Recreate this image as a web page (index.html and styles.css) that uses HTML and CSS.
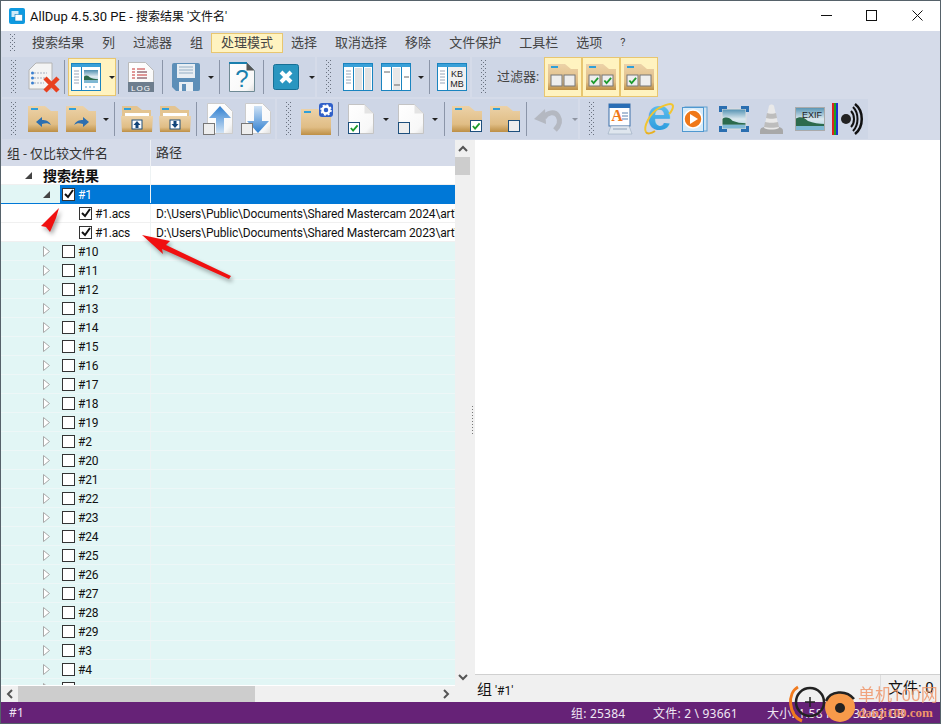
FILE: index.html
```html
<!DOCTYPE html>
<html lang="zh-CN">
<head>
  <meta charset="UTF-8" />
  <title>AllDup 4.5.30 PE</title>
  <link rel="stylesheet" href="styles.css">
</head>
<body>

  <!-- shared icon parts -->
  <svg class="defs" width="0" height="0">
    <defs>
      <linearGradient id="tan" x1="0" y1="0" x2="0" y2="1"><stop offset="0" stop-color="#ecd2a8"/><stop offset="0.7" stop-color="#e0bd85"/><stop offset="1" stop-color="#bd8f45"/></linearGradient>
      <linearGradient id="page" x1="0" y1="0" x2="1" y2="1"><stop offset="0" stop-color="#ffffff"/><stop offset="0.8" stop-color="#f8f8f8"/><stop offset="1" stop-color="#dedede"/></linearGradient>
      <linearGradient id="blueup" x1="0" y1="0" x2="0" y2="1"><stop offset="0" stop-color="#2f7fd0"/><stop offset="1" stop-color="#cfe2f5"/></linearGradient>
      <linearGradient id="bluedown" x1="0" y1="0" x2="0" y2="1"><stop offset="0" stop-color="#cfe2f5"/><stop offset="1" stop-color="#2f7fd0"/></linearGradient>
      <linearGradient id="sky" x1="0" y1="0" x2="0" y2="1"><stop offset="0" stop-color="#4f8fb0"/><stop offset="0.5" stop-color="#dbe8ee"/><stop offset="1" stop-color="#a8cfe0"/></linearGradient>
      <linearGradient id="ieblue" x1="0" y1="0" x2="0" y2="1"><stop offset="0" stop-color="#7fd4f7"/><stop offset="1" stop-color="#1a8fd8"/></linearGradient>

      <symbol id="photo" viewBox="0 0 30 24" preserveAspectRatio="none">
        <rect width="30" height="24" fill="url(#sky)"/>
        <path d="M0 12c5-3 9-2 13 2 5 2 11 3 17 3v2H0z" fill="#2c6a4c"/>
        <rect y="19" width="30" height="5" fill="#7fb8d4"/>
      </symbol>
      <symbol id="folder" viewBox="0 0 30 26">
        <path d="M0 0h17l6 5h7v21H0z" fill="url(#tan)"/>
        <rect x="3" y="2" width="7" height="2" fill="#2f9fd8"/>
      </symbol>
      <symbol id="openfolder" viewBox="0 0 32 26">
        <path d="M1 0h15l5 4h9v10H1z" fill="#e3c491"/>
        <rect x="3" y="2" width="7" height="2" fill="#2f9fd8"/>
        <rect x="4" y="7" width="24" height="4" fill="#fff"/>
        <path d="M0 10h32l-1 16H1z" fill="url(#tan)"/>
        <rect x="11" y="14" width="10" height="9" fill="#fff" stroke="#1d4f7c"/>
      </symbol>
      <symbol id="doc" viewBox="0 0 26 30">
        <path d="M.5.5h16l9 9v20H.5z" fill="url(#page)" stroke="#c4c4c4"/>
        <path d="M16.500.5v9h9z" fill="#e4e4e4"/>
      </symbol>
      <symbol id="gridcols" viewBox="0 0 30 28">
        <rect x=".5" y=".5" width="29" height="27" fill="#fff" stroke="#1a84bf"/>
        <rect x="1" y="1" width="28" height="3" fill="#3aa0d8"/>
        <path d="M10.500 4v24M20.500 4v24" stroke="#1a84bf"/>
      </symbol>
      <symbol id="check" viewBox="0 0 10 10">
        <path d="M1 5l3 3 5-7" fill="none" stroke="#111" stroke-width="2"/>
      </symbol>
      <symbol id="greencheck" viewBox="0 0 10 10">
        <path d="M1.500 5l2.500 3 5-6" fill="none" stroke="#1c9a2c" stroke-width="2"/>
      </symbol>
      <symbol id="tri-closed" viewBox="0 0 7 11">
        <path d="M.5.500l6 5-6 5z" fill="#fff" stroke="#a8a8a8"/>
      </symbol>
      <symbol id="tri-open" viewBox="0 0 7 7">
        <path d="M7 0v7H0z" fill="#444"/>
      </symbol>
    </defs>
  </svg>

  <div class="window">

    <div class="titlebar">
      <svg class="app-icon" width="16" height="16" viewBox="0 0 16 16">
        <rect width="16" height="16" rx="2" fill="#0f9ae0"/>
        <rect x="2.500" y="3" width="7" height="6" fill="#cfeaf8"/>
        <rect x="6" y="6.500" width="7.500" height="6.500" fill="#fff" stroke="#0f7fc0" stroke-width=".6"/>
      </svg>
      <span class="title">AllDup 4.5.30 PE - <span class="title-zh">搜索结果 '文件名'</span></span>
      <div class="win-btns">
        <div class="win-btn"><svg width="11" height="11" viewBox="0 0 11 11"><path d="M0 5.500h11" stroke="#111"/></svg></div>
        <div class="win-btn"><svg width="11" height="11" viewBox="0 0 11 11"><rect x=".5" y=".5" width="10" height="10" fill="none" stroke="#111"/></svg></div>
        <div class="win-btn"><svg width="11" height="11" viewBox="0 0 11 11"><path d="M.5.500l10 10M10.500.500l-10 10" stroke="#111"/></svg></div>
      </div>
    </div>

    <div class="menubar">
      <div class="grip grip-menu ml9"></div>
      <span class="menu-item first">搜索结果</span>
      <span class="menu-item">列</span>
      <span class="menu-item">过滤器</span>
      <span class="menu-item">组</span>
      <span class="menu-item active">处理模式</span>
      <span class="menu-item">选择</span>
      <span class="menu-item">取消选择</span>
      <span class="menu-item">移除</span>
      <span class="menu-item">文件保护</span>
      <span class="menu-item">工具栏</span>
      <span class="menu-item">选项</span>
      <span class="menu-item small">?</span>
    </div>

    <div class="toolrow">
      <div class="band band-a1">
        <div class="grip ml9"></div>
        <svg class="ml12" width="32" height="30" viewBox="0 0 32 30">
          <path d="M1 8l7-7h16v26H1z" fill="#f4f4f4" stroke="#b4b4b4"/>
          <path d="M6 11h13M6 16h13M6 21h10" stroke="#a4aec0" stroke-dasharray="2 1"/>
          <circle cx="4.500" cy="11" r="1.500" fill="#3a7fd0"/><circle cx="4.500" cy="16" r="1.500" fill="#3a7fd0"/><circle cx="4.500" cy="21" r="1.500" fill="#3a7fd0"/>
          <path d="M17 16l13 13M30 16L17 29" stroke="#e8401f" stroke-width="4.500"/>
        </svg>
        <div class="sep ml4"></div>
        <div class="tool-on ml3">
          <svg width="30" height="28" viewBox="0 0 30 28">
            <rect x=".5" y=".5" width="29" height="27" fill="#fff" stroke="#1a84bf"/>
            <rect x="1" y="1" width="28" height="3" fill="#3aa0d8"/>
            <path d="M10.500 4v24" stroke="#1a84bf"/>
            <path d="M3 8h5M3 11h5M3 14h5M3 17h5M3 20h5" stroke="#9aa6b8"/>
            <use href="#photo" x="13" y="7" width="14" height="13"/>
            <path d="M14 24h2M18 24h2M22 24h2" stroke="#5aa0d0"/>
          </svg>
          <i class="drop ml8"></i>
        </div>
        <div class="sep ml2"></div>
        <svg class="ml9" width="26" height="30" viewBox="0 0 26 30">
          <path d="M.5.500h17l8 8v21H.5z" fill="url(#page)" stroke="#bbb"/>
          <path d="M4 7h3M9 7h8M4 10h3M9 10h10M4 13h3M9 13h10M4 16h3M9 16h10" stroke="#c43030"/>
          <path d="M9 10h10M9 16h10" stroke="#8090a0"/>
          <rect y="20" width="26" height="10" fill="#6d7d8d"/>
          <text class="icon-text log" x="13" y="28.500" text-anchor="middle">LOG</text>
        </svg>
        <div class="sep ml8"></div>
        <svg class="ml9" width="28" height="28" viewBox="0 0 28 28">
          <path d="M0 2a2 2 0 0 1 2-2h24a2 2 0 0 1 2 2v24a2 2 0 0 1-2 2H4l-4-4z" fill="#5d8fb8"/>
          <rect x="5" y="1" width="18" height="14" fill="#e8eef3"/>
          <path d="M7 4h14M7 7h14M7 10h14" stroke="#94aec4"/>
          <rect x="7" y="19" width="14" height="9" fill="#e8eef3"/>
          <rect x="10" y="21" width="4" height="7" fill="#5d8fb8"/>
        </svg>
        <i class="drop ml8"></i>
        <div class="sep ml5"></div>
        <svg class="ml9" width="26" height="30" viewBox="0 0 26 30">
          <path d="M.5.500h17l8 8v21H.5z" fill="url(#page)" stroke="#6f8a94"/>
          <path d="M17.500.500v8h8z" fill="#555"/>
          <rect x="0" y="0" width="18" height="2" fill="#1a7fae"/>
          <text class="icon-text qmark" x="13" y="25" text-anchor="middle">?</text>
        </svg>
        <div class="sep ml8"></div>
        <svg class="ml9" width="26" height="26" viewBox="0 0 26 26">
          <rect x=".5" y=".5" width="25" height="25" rx="2" fill="#2a96c0" stroke="#176f95"/>
          <path d="M8 8l10 10M18 8L8 18" stroke="#fff" stroke-width="4"/>
        </svg>
        <i class="drop ml10"></i>
      </div>

      <div class="band band-a2">
        <div class="grip ml9"></div>
        <svg class="ml12" width="30" height="28"><use href="#gridcols"/><path d="M3 8h5M3 11h5M3 14h5M3 17h5M3 20h5" stroke="#9aa6b8"/><rect x="12" y="5" width="7" height="22" fill="#e2e2e2"/><rect x="22" y="5" width="6" height="22" fill="#e2e2e2"/></svg>
        <svg class="ml8" width="30" height="28"><use href="#gridcols"/><rect x="12" y="5" width="7" height="22" fill="#e8e8e8"/><path d="M3 9h6M13 22h6M23 14h5" stroke="#666"/></svg>
        <i class="drop ml7"></i>
        <div class="sep ml5"></div>
        <svg class="ml7" width="30" height="28">
          <use href="#gridcols"/>
          <rect x="11" y="4" width="18" height="23" fill="#f0f0f0"/>
          <path d="M3 8h5M3 11h5M3 14h5M3 17h5M3 20h5" stroke="#9aa6b8"/>
          <text class="icon-text kb" x="20" y="14" text-anchor="middle">KB</text>
          <text class="icon-text kb" x="20" y="24" text-anchor="middle">MB</text>
        </svg>
      </div>

      <div class="band band-a3">
        <div class="grip ml9"></div>
        <span class="filter-label ml11">过滤器:</span>
        <div class="filter-btn ml6">
          <svg width="30" height="26"><use href="#folder"/><rect x="3" y="11" width="11" height="11" fill="#eee" stroke="#777"/><rect x="16" y="11" width="11" height="11" fill="#eee" stroke="#777"/></svg>
        </div>
        <div class="filter-btn">
          <svg width="30" height="26"><use href="#folder"/><rect x="3" y="11" width="11" height="11" fill="#eee" stroke="#777"/><rect x="16" y="11" width="11" height="11" fill="#eee" stroke="#777"/><use href="#greencheck" x="4" y="12" width="9" height="9"/><use href="#greencheck" x="17" y="12" width="9" height="9"/></svg>
        </div>
        <div class="filter-btn">
          <svg width="30" height="26"><use href="#folder"/><rect x="3" y="11" width="11" height="11" fill="#eee" stroke="#777"/><rect x="16" y="11" width="11" height="11" fill="#eee" stroke="#777"/><use href="#greencheck" x="4" y="12" width="9" height="9"/></svg>
        </div>
      </div>
    </div>

    <div class="toolrow second">
      <div class="band band-b1">
        <div class="grip ml9"></div>
        <svg class="ml12" width="30" height="26"><use href="#folder"/><path d="M8 16l6-5v3c4 0 7 1 9 5-3-2-5-2-9-1v3z" fill="#2d6fb0"/></svg>
        <svg class="ml8" width="30" height="26"><use href="#folder"/><path d="M23 16l-6-5v3c-4 0-7 1-9 5 3-2 5-2 9-1v3z" fill="#2d6fb0"/></svg>
        <i class="drop ml7"></i>
        <div class="sep ml5"></div>
        <svg class="ml6" width="32" height="26"><use href="#openfolder"/><path d="M16 15l-3.500 4h2v3h3v-3h2z" fill="#12457a"/></svg>
        <svg class="ml6" width="32" height="26"><use href="#openfolder"/><path d="M16 22l-3.500-4h2v-3h3v3h2z" fill="#12457a"/></svg>
        <div class="sep ml5"></div>
        <svg class="ml6" width="30" height="32" viewBox="0 0 30 32">
          <path d="M4.500.5h17l8 8v22h-25z" fill="url(#page)" stroke="#ccc"/>
          <path d="M17 3L6 15h7v15h8V15h7z" fill="url(#blueup)"/>
          <rect x=".5" y="20.500" width="11" height="11" fill="#eee" stroke="#777"/>
        </svg>
        <svg class="ml8" width="30" height="32" viewBox="0 0 30 32">
          <path d="M4.500.5h17l8 8v22h-25z" fill="url(#page)" stroke="#ccc"/>
          <path d="M17 30L6 18h7V3h8v15h7z" fill="url(#bluedown)"/>
          <rect x=".5" y="20.500" width="11" height="11" fill="#eee" stroke="#777"/>
        </svg>
      </div>

      <div class="band band-b2">
        <div class="grip ml9"></div>
        <svg class="ml10" width="32" height="32" viewBox="0 0 32 32">
          <use href="#folder" y="6" width="30" height="26"/>
          <rect x="18" y="0" width="14" height="14" rx="3" fill="#2f5fc8"/>
          <circle cx="25" cy="7" r="3.500" fill="none" stroke="#fff" stroke-width="2.500"/>
          <circle cx="25" cy="7" r="5" fill="none" stroke="#fff" stroke-width="1.500" stroke-dasharray="2 1.900"/>
        </svg>
        <div class="sep ml5"></div>
        <svg class="ml9" width="26" height="30"><use href="#doc"/><rect x=".5" y="18.500" width="11" height="11" fill="#fff" stroke="#1d4f7c"/><use href="#greencheck" x="1.500" y="19.500" width="9" height="9"/></svg>
        <i class="drop ml9"></i>
        <svg class="ml9" width="26" height="30"><use href="#doc"/><rect x=".5" y="18.500" width="11" height="11" fill="#eee" stroke="#1d4f7c"/></svg>
        <i class="drop ml8"></i>
        <div class="sep ml6"></div>
        <svg class="ml7" width="30" height="26"><use href="#folder"/><rect x="18.500" y="14.500" width="11" height="11" fill="#fff" stroke="#1d4f7c"/><use href="#greencheck" x="19.500" y="15.500" width="9" height="9"/></svg>
        <svg class="ml8" width="30" height="26"><use href="#folder"/><rect x="18.500" y="14.500" width="11" height="11" fill="#eee" stroke="#1d4f7c"/></svg>
        <div class="sep ml6"></div>
        <svg class="ml6" width="31" height="26" viewBox="0 0 31 26">
          <path d="M11 12C14 6 22 5 25 10c3 5 1 10-3 14" fill="none" stroke="#b4b8c1" stroke-width="5"/>
          <path d="M1 13l11-10 1 15z" fill="#b4b8c1"/>
        </svg>
        <i class="drop drop-off ml8"></i>
      </div>

      <div class="band band-b3">
        <div class="grip ml9"></div>
        <svg class="ml14" width="24" height="30" viewBox="0 0 24 30">
          <rect x="1" y="0" width="21" height="22" fill="#fff" stroke="#3a6ea8"/>
          <rect x="1" y="0" width="21" height="4" fill="#2a6eb5"/>
          <text class="icon-text big-a" x="9" y="17" text-anchor="middle">A</text>
          <path d="M14 9h6M14 12h6M14 15h6" stroke="#5a80b0"/>
          <path d="M0 30l3-8h18l3 8z" fill="#dfe6ee" stroke="#8da0b5" stroke-width=".5"/>
          <path d="M5 25h14" stroke="#8da0b5"/>
        </svg>
        <svg class="ml12" width="29" height="32" viewBox="0 0 29 32">
          <text class="icon-text ie" x="15" y="27" text-anchor="middle">e</text>
          <path d="M2 29C-1 24 6 10 15 5c6-3 13-6 14-2 0 2-2 6-4 8" fill="none" stroke="#f2c530" stroke-width="2"/>
          <path d="M2 29c1 2 5 2 9-1" fill="none" stroke="#e8b020" stroke-width="2"/>
        </svg>
        <svg class="ml9" width="26" height="26" viewBox="0 0 26 26">
          <rect x="3" y="1" width="22" height="24" fill="#cfe2f2" stroke="#5fa0d0"/>
          <rect x="0.500" y="1.500" width="21" height="24" fill="#d8ebf8" stroke="#4f98d0"/>
          <circle cx="11" cy="13" r="9" fill="#f07818" stroke="#fff" stroke-width="1.500"/>
          <path d="M8 8l8 5-8 5z" fill="#fff"/>
        </svg>
        <svg class="ml11" width="30" height="26" viewBox="0 0 30 26">
          <use href="#photo" x="3" y="3" width="24" height="20"/>
          <rect x="3" y="3" width="24" height="20" fill="none" stroke="#ddd"/>
          <path d="M0 6V0h8v3H3v3zM22 0h8v6h-3V3h-5zM0 20h3v3h5v3H0zM27 20h3v6h-8v-3h5z" fill="#2a6eb0"/>
        </svg>
        <svg class="ml9" width="27" height="30" viewBox="0 0 27 30">
          <path d="M2 27c0-3 3-4 5-4h13c2 0 5 1 5 4v3H2z" fill="#a8a8a8"/>
          <path d="M11 2c1-2 4-2 5 0l5 22c-4 2-11 2-15 0z" fill="#e9e9e9"/>
          <path d="M9 9c2 1 7 1 9 0l1 5c-3 1-8 1-11 0zM7 18c3 1 10 1 13 0l1 5c-4 1-11 1-15 0z" fill="#bdbdbd"/>
        </svg>
        <svg class="ml10" width="30" height="24" viewBox="0 0 30 24">
          <use href="#photo" width="30" height="24"/>
          <rect x=".5" y=".5" width="29" height="23" fill="none" stroke="#aaa"/>
          <text class="icon-text exif" x="17" y="11" text-anchor="middle">EXIF</text>
        </svg>
        <svg class="ml7" width="33" height="32" viewBox="0 0 33 32">
          <rect width="2" height="32" fill="#e02020"/><rect x="2" width="2" height="32" fill="#20a020"/><rect x="4" width="2" height="32" fill="#2030d0"/>
          <circle cx="14" cy="16" r="5" fill="#222"/>
          <path d="M19 8c4 4 4 12 0 16M21 4c6 6 6 18 0 24" fill="none" stroke="#111" stroke-width="2"/>
          <path d="M23 1c9 7 9 23 0 30" fill="none" stroke="#111" stroke-width="2.500"/>
        </svg>
      </div>
    </div>

    <div class="main">
      <div class="left">
        <div class="left-top">
          <div class="tree">
            <div class="tree-head">
              <span class="head-name">组 - 仅比较文件名</span>
              <span class="head-path">路径</span>
            </div>
            <div class="rows">
              <div class="row white root"><span class="name"><svg class="tri-o" width="7" height="7"><use href="#tri-open"/></svg><b>搜索结果</b></span><span class="path"></span></div>
              <div class="row sel"><span class="name"><svg class="tri-o" width="7" height="7"><use href="#tri-open"/></svg><i class="chk"><svg width="10" height="10"><use href="#check"/></svg></i><span>#1</span></span><span class="path"></span></div>
              <div class="row white child"><span class="name"><i class="chk"><svg width="10" height="10"><use href="#check"/></svg></i><span>#1.acs</span></span><span class="path">D:\Users\Public\Documents\Shared Mastercam 2024\art\Samples</span></div>
              <div class="row white child"><span class="name"><i class="chk"><svg width="10" height="10"><use href="#check"/></svg></i><span>#1.acs</span></span><span class="path">D:\Users\Public\Documents\Shared Mastercam 2023\art\Samples</span></div>
              <div class="row"><span class="name"><svg class="tri-c" width="7" height="11"><use href="#tri-closed"/></svg><i class="chk"></i><span>#10</span></span><span class="path"></span></div>
              <div class="row"><span class="name"><svg class="tri-c" width="7" height="11"><use href="#tri-closed"/></svg><i class="chk"></i><span>#11</span></span><span class="path"></span></div>
              <div class="row"><span class="name"><svg class="tri-c" width="7" height="11"><use href="#tri-closed"/></svg><i class="chk"></i><span>#12</span></span><span class="path"></span></div>
              <div class="row"><span class="name"><svg class="tri-c" width="7" height="11"><use href="#tri-closed"/></svg><i class="chk"></i><span>#13</span></span><span class="path"></span></div>
              <div class="row"><span class="name"><svg class="tri-c" width="7" height="11"><use href="#tri-closed"/></svg><i class="chk"></i><span>#14</span></span><span class="path"></span></div>
              <div class="row"><span class="name"><svg class="tri-c" width="7" height="11"><use href="#tri-closed"/></svg><i class="chk"></i><span>#15</span></span><span class="path"></span></div>
              <div class="row"><span class="name"><svg class="tri-c" width="7" height="11"><use href="#tri-closed"/></svg><i class="chk"></i><span>#16</span></span><span class="path"></span></div>
              <div class="row"><span class="name"><svg class="tri-c" width="7" height="11"><use href="#tri-closed"/></svg><i class="chk"></i><span>#17</span></span><span class="path"></span></div>
              <div class="row"><span class="name"><svg class="tri-c" width="7" height="11"><use href="#tri-closed"/></svg><i class="chk"></i><span>#18</span></span><span class="path"></span></div>
              <div class="row"><span class="name"><svg class="tri-c" width="7" height="11"><use href="#tri-closed"/></svg><i class="chk"></i><span>#19</span></span><span class="path"></span></div>
              <div class="row"><span class="name"><svg class="tri-c" width="7" height="11"><use href="#tri-closed"/></svg><i class="chk"></i><span>#2</span></span><span class="path"></span></div>
              <div class="row"><span class="name"><svg class="tri-c" width="7" height="11"><use href="#tri-closed"/></svg><i class="chk"></i><span>#20</span></span><span class="path"></span></div>
              <div class="row"><span class="name"><svg class="tri-c" width="7" height="11"><use href="#tri-closed"/></svg><i class="chk"></i><span>#21</span></span><span class="path"></span></div>
              <div class="row"><span class="name"><svg class="tri-c" width="7" height="11"><use href="#tri-closed"/></svg><i class="chk"></i><span>#22</span></span><span class="path"></span></div>
              <div class="row"><span class="name"><svg class="tri-c" width="7" height="11"><use href="#tri-closed"/></svg><i class="chk"></i><span>#23</span></span><span class="path"></span></div>
              <div class="row"><span class="name"><svg class="tri-c" width="7" height="11"><use href="#tri-closed"/></svg><i class="chk"></i><span>#24</span></span><span class="path"></span></div>
              <div class="row"><span class="name"><svg class="tri-c" width="7" height="11"><use href="#tri-closed"/></svg><i class="chk"></i><span>#25</span></span><span class="path"></span></div>
              <div class="row"><span class="name"><svg class="tri-c" width="7" height="11"><use href="#tri-closed"/></svg><i class="chk"></i><span>#26</span></span><span class="path"></span></div>
              <div class="row"><span class="name"><svg class="tri-c" width="7" height="11"><use href="#tri-closed"/></svg><i class="chk"></i><span>#27</span></span><span class="path"></span></div>
              <div class="row"><span class="name"><svg class="tri-c" width="7" height="11"><use href="#tri-closed"/></svg><i class="chk"></i><span>#28</span></span><span class="path"></span></div>
              <div class="row"><span class="name"><svg class="tri-c" width="7" height="11"><use href="#tri-closed"/></svg><i class="chk"></i><span>#29</span></span><span class="path"></span></div>
              <div class="row"><span class="name"><svg class="tri-c" width="7" height="11"><use href="#tri-closed"/></svg><i class="chk"></i><span>#3</span></span><span class="path"></span></div>
              <div class="row"><span class="name"><svg class="tri-c" width="7" height="11"><use href="#tri-closed"/></svg><i class="chk"></i><span>#4</span></span><span class="path"></span></div>
              <div class="row"><span class="name"><svg class="tri-c" width="7" height="11"><use href="#tri-closed"/></svg><i class="chk"></i></span><span class="path"></span></div>
            </div>
          </div>
          <div class="vscroll">
            <svg width="10" height="6" viewBox="0 0 10 6"><path d="M1 5l4-4 4 4" fill="none" stroke="#555" stroke-width="2"/></svg>
            <div class="vthumb"></div>
            <svg class="vdown" width="10" height="6" viewBox="0 0 10 6"><path d="M1 1l4 4 4-4" fill="none" stroke="#555" stroke-width="2"/></svg>
          </div>
        </div>
        <div class="hscroll">
          <svg class="harrow" width="6" height="10" viewBox="0 0 6 10"><path d="M5 1L1 5l4 4" fill="none" stroke="#555" stroke-width="2"/></svg>
          <div class="hthumb"></div>
          <svg class="harrow hright" width="6" height="10" viewBox="0 0 6 10"><path d="M1 1l4 4-4 4" fill="none" stroke="#555" stroke-width="2"/></svg>
        </div>
      </div>

      <div class="splitter"><div class="split-dots"></div></div>

      <div class="right">
        <div class="preview"></div>
        <div class="right-foot">
          <span class="foot-group"><span class="foot-zh">组</span> '#1'</span>
          <span class="foot-files">文件: 0</span>
        </div>
      </div>
    </div>

    <div class="statusbar">
      <span class="st-sel">#1</span>
      <span class="st-group">组: 25384</span>
      <span class="st-files">文件: 2 \ 93661</span>
      <span class="st-size">大小: 1.58 KB \ 32.62 GB</span>
    </div>
  </div>

  <!-- red arrows drawn over the tree -->
  <svg class="arrows" width="941" height="724" viewBox="0 0 941 724">
    <polygon points="59,208 41,226 46,227 50,232 56,218" fill="#f01010"/>
    <polygon points="142,235 170,241 166,245 231,276 229,279 162,249 163,254" fill="#f01010"/>
  </svg>

  <!-- site watermark -->
  <div class="watermark">
    <svg class="wm-logo" width="66" height="38" viewBox="0 0 66 38">
      <path d="M8 2C-3 8-2 30 12 36" fill="none" stroke="#f07a1e" stroke-width="3"/>
      <circle cx="20" cy="17" r="14" fill="none" stroke="#222" stroke-width="2.500"/>
      <path d="M20 12v10M15 17h10" stroke="#222" stroke-width="1.500"/>
      <circle cx="50" cy="22" r="15" fill="#f79a4a"/>
      <path d="M36 16C40 6 56 4 64 14" fill="none" stroke="#222" stroke-width="2.500"/>
      <circle cx="50" cy="23" r="5" fill="#222"/>
    </svg>
    <div class="wm-text">
      <span class="wm-zh">单机100网</span>
      <span class="wm-en">danji100.com</span>
    </div>
  </div>

</body>
</html>
```

FILE: styles.css
```css
* {
  box-sizing: border-box;
}

html, body {
  margin: 0;
  padding: 0;
  height: 100%;
  overflow: hidden;
}

body {
  background-color: #56626a;
  font-family: Roboto, "Noto Sans CJK SC", sans-serif;
  font-size: 12px;
  color: #111;
}

.defs {
  position: absolute;
}

svg {
  flex: none;
  display: block;
  overflow: visible;
}

i {
  font-style: normal;
}

.window {
  width: 939px;
  height: 722px;
  margin: 1px 0 0 1px;
  display: flex;
  flex-direction: column;
  background-color: #d5dbe9;
}

/* spacing used along the toolbars */
.ml2 { margin-left: 2px; }
.ml3 { margin-left: 3px; }
.ml4 { margin-left: 4px; }
.ml5 { margin-left: 5px; }
.ml6 { margin-left: 6px; }
.ml7 { margin-left: 7px; }
.ml8 { margin-left: 8px; }
.ml9 { margin-left: 9px; }
.ml10 { margin-left: 10px; }
.ml11 { margin-left: 11px; }
.ml12 { margin-left: 12px; }
.ml14 { margin-left: 14px; }

/* title bar */
.titlebar {
  height: 30px;
  padding-bottom: 1px;
  display: flex;
  align-items: center;
  background-color: white;
}

.app-icon {
  margin-left: 8px;
}

.title {
  margin-left: 5px;
  font-size: 13px;
  color: #111;
  white-space: nowrap;
}

.title-zh {
  font-size: 12px;
}

.win-btns {
  margin-left: auto;
  display: flex;
}

.win-btn {
  width: 45.500px;
  height: 30px;
  display: flex;
  align-items: center;
  justify-content: center;
}

/* menu */
.menubar {
  height: 26px;
  padding-bottom: 2px;
  display: flex;
  align-items: center;
  font-size: 13px;
  color: #444;
}

.menu-item {
  height: 20px;
  line-height: 17px;
  border: 1px solid transparent;
  margin: 0 -1px;
  padding: 0 9px;
  white-space: nowrap;
}

.menu-item.first {
  margin-left: 7px;
}

.menu-item.active {
  background-color: #fff3c0;
  border-color: #e8c670;
}

.menu-item.small {
  font-size: 11px;
}

/* dots in two staggered sets, 4px apart */
.grip {
  flex: none;
  width: 5px;
  height: 34px;
  background-image:
    radial-gradient(circle at 0.5px 0.5px, #6a7280 0.7px, transparent 0.8px),
    radial-gradient(circle at 0.5px 0.5px, #6a7280 0.7px, transparent 0.8px);
  background-size: 4px 4px;
  background-position: 0 0, 2px 2px;
}

.grip-menu {
  height: 18px;
}

/* toolbars */
.toolrow {
  height: 40px;
  margin-left: 1px;
  display: flex;
  gap: 2px;
}

.toolrow.second {
  margin-top: 2px;
}

.band {
  height: 40px;
  display: flex;
  align-items: center;
  background-color: #ced6e6;
}

.band-a1 { width: 313px; }
.band-a2 { width: 153px; }
.band-a3 { width: 186px; }
.band-b1 { width: 273px; }
.band-b2 { width: 301px; }
.band-b3 { width: 288px; }

.sep {
  flex: none;
  width: 1px;
  height: 34px;
  background-color: #8b95a8;
}

.drop {
  flex: none;
  width: 0;
  height: 0;
  border-left: 3px solid transparent;
  border-right: 3px solid transparent;
  border-top: 3px solid #222;
}

.drop-off {
  border-top-color: #8f95a2;
}

.tool-on {
  width: 49px;
  height: 38px;
  padding-left: 2px;
  display: flex;
  align-items: center;
  background-color: #fff3c0;
  border: 1px solid #e8c670;
}

.filter-label {
  width: 41px;
  padding-bottom: 3px;
  font-size: 13px;
  color: #444;
  white-space: nowrap;
}

.filter-btn {
  width: 38px;
  height: 40px;
  display: flex;
  align-items: center;
  justify-content: center;
  background-color: #fff3c0;
  border: 1px solid #e8c670;
}

.icon-text {
  font-family: "Liberation Sans", sans-serif;
}

.log {
  font-size: 8px;
  letter-spacing: 1px;
  fill: white;
}

.qmark {
  font-size: 24px;
  fill: #1a7fae;
}

.kb {
  font-size: 9px;
  fill: #222;
}

.big-a {
  font-size: 16px;
  font-weight: bold;
  fill: #f07818;
  font-family: "Liberation Serif", serif;
}

.ie {
  font-size: 44px;
  font-weight: bold;
  fill: url(#ieblue);
}

.exif {
  font-size: 9px;
  fill: #222;
}

/* main area */
.main {
  height: 562px;
  margin-top: 1px;
  display: flex;
  background-color: #f0f0f0;
}

.left {
  width: 469px;
  display: flex;
  flex-direction: column;
}

.left-top {
  height: 546px;
  display: flex;
}

.tree {
  width: 454px;
  display: flex;
  flex-direction: column;
  border-bottom: 1px solid white;
}

.tree-head {
  height: 26px;
  flex: none;
  display: flex;
  align-items: center;
  background-color: #d5dbe9;
  color: #333;
  font-size: 13px;
}

.head-name {
  width: 150px;
  height: 100%;
  line-height: 28px;
  padding-left: 6px;
  border-right: 1px solid #eef0f5;
}

.head-path {
  line-height: 28px;
  padding-left: 5px;
}

.rows {
  flex: 1;
  overflow: hidden;
  background-color: #e2f6f5;
}

.row {
  height: 19px;
  display: flex;
  background-color: #e2f6f5;
  border-bottom: 1px solid #edf7f7;
}

.row.white {
  background-color: white;
  border-bottom-color: #f0f0f0;
}

.name {
  width: 150px;
  flex: none;
  height: 18px;
  display: flex;
  align-items: center;
  padding-left: 42px;
  border-right: 1px solid #eef3f4;
  white-space: nowrap;
  overflow: hidden;
}

.name span {
  padding-top: 1px;
  letter-spacing: -0.2px;
}

.path {
  flex: 1;
  min-width: 0;
  line-height: 20px;
  padding-left: 5px;
  letter-spacing: -0.15px;
  white-space: nowrap;
  overflow: hidden;
}

.tri-c {
  margin-right: 12px;
}

.tri-o {
  margin-right: 12px;
}

.chk {
  flex: none;
  width: 13px;
  height: 13px;
  margin-right: 3px;
  display: flex;
  align-items: center;
  justify-content: center;
  background-color: white;
  border: 1px solid #333;
}

.row.root .name {
  padding-left: 24px;
}

.row.root .tri-o {
  margin-right: 11px;
}

.row.root b {
  font-size: 14px;
}

.row.child .name {
  padding-left: 78px;
}

.row.sel {
  background-color: #0078d7;
  border-bottom-color: #0078d7;
  color: white;
}

.row.sel .name {
  background: linear-gradient(90deg, #e2f6f5 59px, #0078d7 59px);
}

/* scrollbars */
.vscroll {
  width: 15px;
  position: relative;
  display: flex;
  flex-direction: column;
  align-items: center;
  padding-top: 6px;
  background-color: #f0f0f0;
}

.vthumb {
  width: 15px;
  height: 18px;
  margin-top: 5px;
  background-color: #cdcdcd;
}

.vdown {
  margin-top: auto;
  margin-bottom: 6px;
}

.hscroll {
  height: 16px;
  display: flex;
  align-items: center;
  background-color: #f0f0f0;
}

.harrow {
  margin-left: 6px;
}

.hthumb {
  width: 237px;
  height: 16px;
  margin-left: 5px;
  background-color: #cdcdcd;
}

.hright {
  margin-left: 188px;
}

.splitter {
  width: 5px;
  display: flex;
  align-items: center;
  justify-content: center;
}

.split-dots {
  width: 2px;
  height: 30px;
  background-image: radial-gradient(circle at 0.5px 0.5px, #777 0.7px, transparent 0.8px);
  background-size: 2px 3px;
}

.right {
  flex: 1;
  display: flex;
  flex-direction: column;
}

.preview {
  flex: 1;
  background-color: white;
  border-bottom: 1px solid #d0d0d0;
}

.right-foot {
  height: 27px;
  flex: none;
  display: flex;
  align-items: center;
  justify-content: space-between;
  padding-left: 2px;
  font-size: 12px;
}

.foot-zh {
  font-size: 15px;
}

.foot-files {
  width: 60px;
  height: 100%;
  line-height: 27px;
  padding-left: 7px;
  font-size: 15px;
  border-left: 1px solid #ddd;
  white-space: nowrap;
}

/* status bar */
.statusbar {
  height: 21px;
  flex: none;
  display: flex;
  align-items: center;
  padding-left: 8px;
  background-color: #662277;
  color: #f0e8f4;
  white-space: nowrap;
  font-family: "Noto Sans", "Noto Sans CJK SC", sans-serif;
  letter-spacing: 0.2px;
}

.st-sel { width: 562px; }
.st-group { width: 82px; }
.st-files { width: 114px; }

/* overlays */
.arrows {
  position: absolute;
  top: 0;
  left: 0;
  pointer-events: none;
  filter: drop-shadow(2px 3px 2px rgba(0, 0, 0, 0.35));
}

.watermark {
  position: absolute;
  left: 790px;
  top: 685px;
  display: flex;
}

.wm-text {
  display: flex;
  flex-direction: column;
  margin-left: 2px;
  color: #f0966a;
  white-space: nowrap;
}

.wm-zh {
  font-size: 17px;
  line-height: 20px;
  opacity: 0.85;
}

.wm-en {
  font-size: 13px;
  line-height: 16px;
  font-family: "Liberation Serif", serif;
  font-weight: bold;
}
```
